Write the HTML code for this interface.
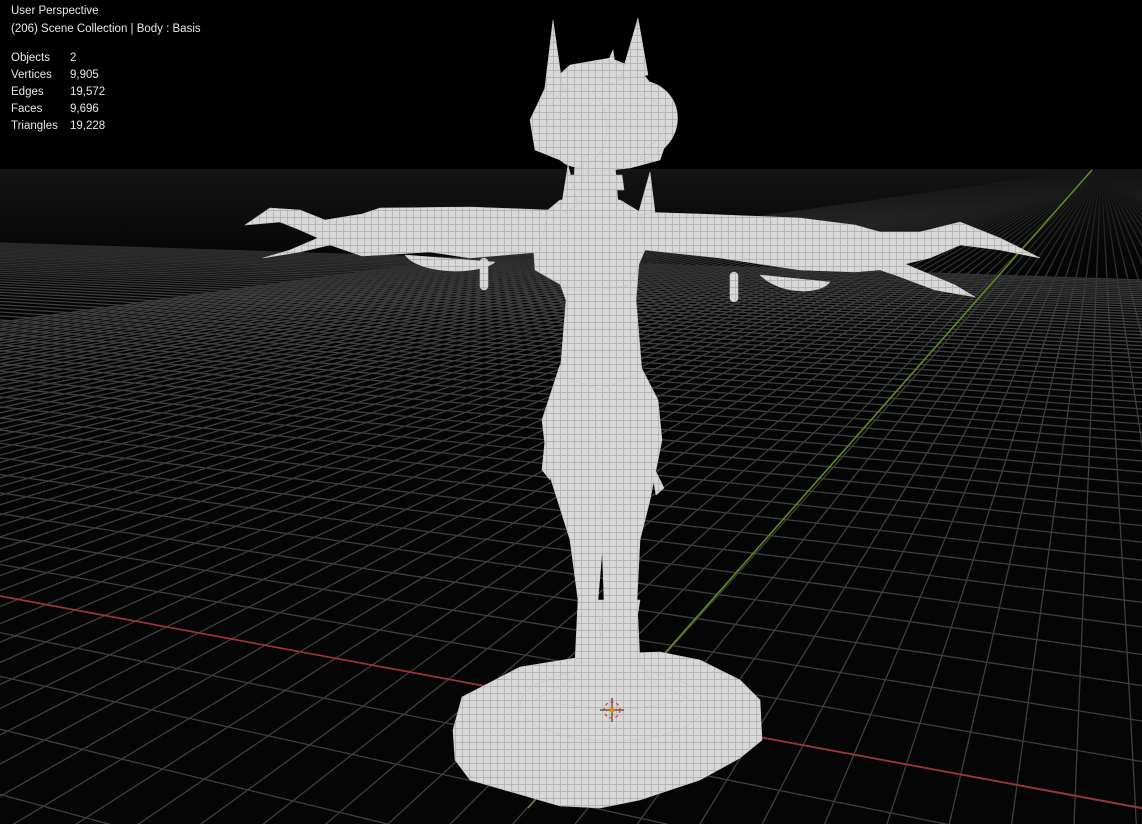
<!DOCTYPE html>
<html><head><meta charset="utf-8"><style>
html,body{margin:0;padding:0;background:#000;width:1142px;height:824px;overflow:hidden}
svg{position:absolute;left:0;top:0}
.t{position:absolute;color:#e8e8e8;font:11.5px "Liberation Sans",sans-serif;white-space:nowrap;text-shadow:0 0 2px #000}
</style></head><body>
<svg id="g" width="1142" height="824" viewBox="0 0 1142 824">
<defs>
<linearGradient id="fade" x1="0" y1="0" x2="0" y2="1">
<stop offset="0" stop-color="#141414" stop-opacity="1"/>
<stop offset="0.4" stop-color="#101010" stop-opacity="0.6"/>
<stop offset="1" stop-color="#000" stop-opacity="0"/>
</linearGradient>
<clipPath id="floor"><rect x="0" y="169" width="1142" height="655"/></clipPath>
<pattern id="mesh" width="7" height="7" patternUnits="userSpaceOnUse">
<rect width="7" height="7" fill="#d8d8d8"/>
<path d="M0 0.5H7M0.5 0V7" stroke="#ababab" stroke-width="0.7"/>
</pattern>
</defs>
<rect x="0" y="169" width="1142" height="655" fill="#050505"/>
<g id="grid" clip-path="url(#floor)" stroke="#3e3e3e" stroke-width="1.3" fill="none"></g>
<rect x="0" y="169" width="1142" height="130" fill="url(#fade)"/>
<line x1="0" y1="596" x2="1142" y2="808" stroke="#a8303c" stroke-width="1.6"/>
<line x1="528" y1="808" x2="1092" y2="170" stroke="#5f8a1e" stroke-width="1.6"/>
<g fill="url(#mesh)" stroke="#c4c4c4" stroke-width="0.6" stroke-linejoin="round">
<!-- base -->
<path d="M462 697 L520 667 L600 654 L660 652 L700 660 L740 680 L760 700 L762 740 L740 758 L700 780 L640 800 L600 808 L560 806 L470 780 L455 760 L453 730 Z"/>
<ellipse cx="612" cy="705" rx="92" ry="36"/>
<path d="M583 600 L640 600 L632 650 L650 680 L690 700 L612 712 L535 700 L572 680 L585 650 Z"/>
<!-- legs -->
<path d="M560 365 L605 375 L608 450 L603 540 L598 600 L602 662 L575 662 L578 600 L570 540 L548 470 L542 420 Z"/>
<path d="M595 380 L640 365 L658 400 L662 440 L650 500 L640 540 L637 600 L640 662 L598 662 L604 600 L602 540 L598 470 Z"/>
<path d="M545 440 L550 480 L542 470 Z"/>
<path d="M650 460 L664 488 L656 495 Z"/>
<!-- torso -->
<path d="M548 250 L640 250 L636 300 L642 372 L600 390 L560 375 L566 300 Z"/>
<path d="M548 210 L560 200 L620 200 L640 212 L645 250 L630 285 L600 290 L570 290 L535 270 L533 240 Z"/>
<!-- arms -->
<path d="M548 210 L470 207 L380 208 L362 214 L325 220 L300 210 L270 208 L245 225 L280 222 L300 230 L318 238 L290 250 L263 258 L300 252 L330 245 L362 256 L380 255 L430 252 L470 258 L540 252 Z"/>
<path d="M640 212 L700 214 L800 218 L855 225 L880 232 L920 232 L960 222 L1000 238 L1040 258 L1000 250 L960 245 L930 258 L905 264 L955 285 L975 297 L935 290 L895 275 L880 270 L855 272 L800 270 L720 258 L645 250 Z"/>
<!-- neck -->
<path d="M575 165 L615 165 L618 202 L572 202 Z"/>
<path d="M567 175 L622 175 L624 190 L566 190 Z"/>
<!-- spikes -->
<path d="M560 215 L568 165 L578 205 Z"/>
<path d="M638 215 L650 172 L655 212 Z"/>
<!-- hair -->
<path d="M530 120 L545 88 L570 65 L610 58 L640 70 L660 95 L672 125 L660 160 L630 168 L595 172 L560 160 L535 150 Z"/>
<path d="M640 80 C690 85 690 150 640 160 L645 148 C675 135 670 100 640 95 Z"/>
<ellipse cx="577" cy="127" rx="30" ry="40"/>
<path d="M544 95 L553 20 L563 90 Z"/>
<path d="M620 80 L638 18 L648 75 Z"/>
<path d="M600 80 L613 50 L618 85 Z"/>
<!-- drips -->
<rect x="480" y="258" width="8" height="32" rx="4"/>
<rect x="730" y="272" width="8" height="30" rx="4"/>
<rect x="583" y="155" width="5" height="28" rx="2.5"/>
<path d="M405 255 C420 275 480 275 495 262 Z"/>
<path d="M760 275 C780 295 820 295 830 282 Z"/>
</g>
<g stroke="#222" stroke-width="1"><path d="M612 698V722M600 710H624"/></g>
<circle cx="612" cy="710" r="8" fill="none" stroke="#e33" stroke-width="1.2" stroke-dasharray="3 3"/>
<circle cx="612" cy="710" r="2.5" fill="#e80"/>
</svg>
<div class="t" style="left:11px;top:5px">User Perspective</div>
<div class="t" style="left:11px;top:23px">(206) Scene Collection | Body : Basis</div>
<div class="t" style="left:11px;top:52px">Objects</div><div class="t" style="left:70px;top:52px">2</div>
<div class="t" style="left:11px;top:69px">Vertices</div><div class="t" style="left:70px;top:69px">9,905</div>
<div class="t" style="left:11px;top:86px">Edges</div><div class="t" style="left:70px;top:86px">19,572</div>
<div class="t" style="left:11px;top:103px">Faces</div><div class="t" style="left:70px;top:103px">9,696</div>
<div class="t" style="left:11px;top:120px">Triangles</div><div class="t" style="left:70px;top:120px">19,228</div>
<script>
(function(){
var O=[614.8,710.4],V1=[-2290,169],V2=[1101,169],a=0.0152,b=0.068;
function P(u,v){var d=1+a*u+b*v;return[(O[0]+a*u*V1[0]+b*v*V2[0])/d,(O[1]+a*u*V1[1]+b*v*V2[1])/d];}
var g=document.getElementById('grid'),s='';
function L(V,p){var dx=p[0]-V[0],dy=p[1]-V[1],k=Math.min(12,(830-V[1])/Math.max(dy,0.01));k=Math.max(k,1);var x2=V[0]+k*dx,y2=V[1]+k*dy;s+='<line x1="'+V[0]+'" y1="'+V[1]+'" x2="'+x2+'" y2="'+y2+'"/>';}
for(var c=-14;c<=60;c++){L(V1,P(0,c));}
for(var c=-60;c<=66;c++){if(1+a*c>0.02)L(V2,P(c,0));}
g.innerHTML=s;
})();
</script>
</body></html>
